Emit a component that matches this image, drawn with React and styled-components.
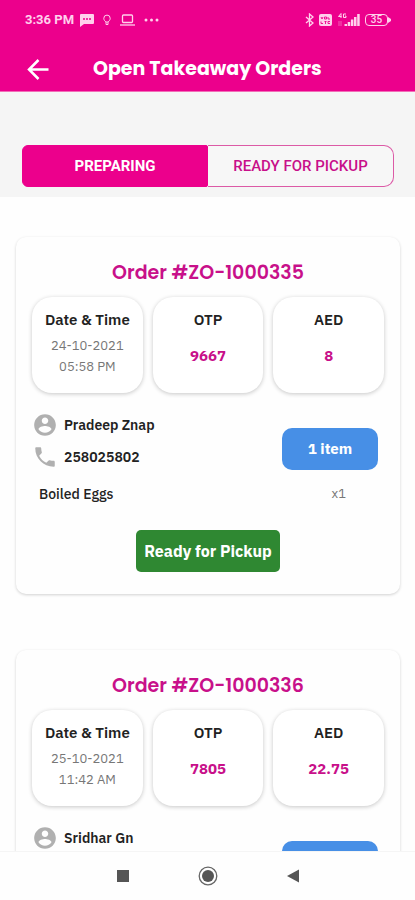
import React from "react";
import styled, { createGlobalStyle } from "styled-components";

const brand = "#ec008c";
const accent = "#c8108a";
const display = '"Poppins", "Inter", sans-serif';
const body = '"IBM Plex Sans", "Noto Sans", sans-serif';
const system = '"Roboto", sans-serif';

const GlobalStyle = createGlobalStyle`
  *, *::before, *::after { box-sizing: border-box; }
  body { margin: 0; background: #fefefe; font-family: ${body}; color: #222; }
  h1, h2, h3, p, ul, dl, dd { margin: 0; padding: 0; }
  button { font: inherit; border: 0; padding: 0; cursor: pointer; }
`;

const Screen = styled.div`
  display: flex;
  flex-direction: column;
  height: 100vh;
`;

const Top = styled.header`
  flex: none;
  background: ${brand};
  color: #fff;
  border-bottom: 1px solid #f26db8;
`;

const StatusBar = styled.div`
  display: flex;
  align-items: center;
  justify-content: space-between;
  height: 40px;
  padding: 0 24px 0 25px;
  font: 700 13px/16px ${system};
  color: #ffd0ec;
`;

const StatusGroup = styled.div`
  display: flex;
  align-items: center;
  gap: ${(p) => p.$gap}px;
  svg { display: block; }
`;

const TitleBar = styled.div`
  display: flex;
  align-items: center;
  height: 51px;
  padding: 6px 24px 0;
  gap: 41px;
`;

const BackButton = styled.button`
  display: flex;
  width: 28px;
  height: 28px;
  align-items: center;
  justify-content: center;
  background: none;
  color: #fff;
`;

const PageTitle = styled.h1`
  font: 700 19px/28px ${display};
  white-space: nowrap;
`;

const Content = styled.main`
  flex: 1;
  min-height: 0;
  overflow-y: auto;
  scrollbar-width: none;
`;

const TabStrip = styled.div`
  padding: 53px 21px 10px 22px;
  background: #f5f5f5;
`;

const Tabs = styled.div`
  display: grid;
  grid-template-columns: 1fr 1fr;
  height: 42px;
`;

const Tab = styled.button`
  font: ${(p) => (p.$active ? 700 : 500)} 15px/20px ${system};
  background: ${(p) => (p.$active ? brand : "#f7f7f7")};
  color: ${(p) => (p.$active ? "#fff" : accent)};
  border: 1px solid ${(p) => (p.$active ? brand : "#dc5aa6")};
  border-left-width: ${(p) => (p.$active ? 1 : 0)}px;
  border-radius: ${(p) => (p.$active ? "6px 2px 2px 6px" : "0 10px 10px 0")};
`;

const Orders = styled.div`
  display: flex;
  flex-direction: column;
  gap: 56px;
  padding: 40px 15px 40px 16px;
`;

const Card = styled.article`
  padding: 21px 16px 22px;
  border-radius: 10px;
  background: #fefefe;
  box-shadow: 0 1px 3px rgba(0, 0, 0, 0.18);
`;

const OrderTitle = styled.h2`
  font: 600 19px/30px ${display};
  color: ${accent};
  text-align: center;
`;

const Tiles = styled.div`
  display: grid;
  grid-template-columns: repeat(3, 1fr);
  gap: 10px;
  margin-top: 9px;
`;

const Tile = styled.section`
  display: flex;
  flex-direction: column;
  height: 96px;
  padding: 12px 4px;
  border-radius: 20px;
  background: #fff;
  text-align: center;
  box-shadow: 0 1px 4px rgba(0, 0, 0, 0.22);
`;

const TileLabel = styled.h3`
  font: 600 15px/22px ${body};
`;

const TileText = styled.p`
  margin-top: 4px;
  font: 400 13px/21px ${body};
  color: #777;
`;

const TileValue = styled.p`
  margin-top: 14px;
  font: 700 15px/22px ${body};
  color: ${accent};
`;

const Customer = styled.div`
  display: flex;
  justify-content: space-between;
  align-items: flex-start;
  margin-top: 20px;
  padding-right: 6px;
`;

const Contacts = styled.ul`
  display: flex;
  flex-direction: column;
  gap: 8px;
  list-style: none;
`;

const Contact = styled.li`
  display: flex;
  align-items: center;
  gap: 6px;
  height: 24px;
  font: 600 14px/22px ${body};
  svg { display: block; fill: #b0b0b0; }
`;

const CountButton = styled.button`
  width: 96px;
  height: 42px;
  margin-top: 15px;
  border-radius: 10px;
  background: #478fe6;
  color: #fff;
  font: 700 15px/20px ${body};
`;

const Line = styled.div`
  display: flex;
  justify-content: space-between;
  margin-top: 13px;
  padding: 0 38px 0 7px;
  font: 500 14px/22px ${body};
`;

const Quantity = styled.span`
  font-size: 13px;
  font-weight: 400;
  color: #777;
`;

const ReadyButton = styled.button`
  display: block;
  height: 42px;
  margin: 25px auto 0;
  padding: 0 8px;
  border-radius: 5px;
  background: #2f8832;
  color: #fff;
  font: 700 16px/22px ${body};
`;

const NavBar = styled.nav`
  flex: none;
  display: flex;
  justify-content: center;
  align-items: center;
  gap: 61px;
  height: 49px;
  border-top: 1px solid #f5f5f5;
  background: #fefefe;
`;

const NavButton = styled.button`
  display: flex;
  width: 24px;
  height: 24px;
  background: none;
  svg { display: block; }
`;

const orders = [
  { id: "ZO-1000335", date: "24-10-2021", time: "05:58 PM", otp: "9667", total: "8", name: "Pradeep Znap", phone: "258025802", count: "1 item", item: "Boiled Eggs", qty: "x1" },
  { id: "ZO-1000336", date: "25-10-2021", time: "11:42 AM", otp: "7805", total: "22.75", name: "Sridhar Gn", phone: "", count: "", item: "", qty: "" },
];

const MessageIcon = () => (
  <svg width="14" height="14" viewBox="0 0 14 14" fill="currentColor">
    <path d="M1 1h12a1 1 0 0 1 1 1v8a1 1 0 0 1-1 1H4l-4 3V2a1 1 0 0 1 1-1z" />
    <path d="M3 6h2M6 6h2M9 6h2" stroke={brand} strokeWidth="1.5" />
  </svg>
);

const BulbIcon = () => (
  <svg width="8" height="12" viewBox="0 0 8 12" fill="none" stroke="currentColor">
    <path d="M3 8C1.600 7 .8 5.800.8 4.300a3.200 3.200 0 0 1 6.400 0C7.200 5.800 6.400 7 5 8M3 8h2v2.500H3z" />
  </svg>
);

const LaptopIcon = () => (
  <svg width="15" height="12" viewBox="0 0 15 12" fill="none" stroke="currentColor" strokeWidth="1.300">
    <rect x="2.500" y="1" width="10" height="7.500" rx="1" />
    <path d="M0 11h15" />
  </svg>
);

const DotsIcon = () => (
  <svg width="15" height="4" viewBox="0 0 15 4" fill="currentColor">
    <circle cx="2" cy="2" r="1.500" />
    <circle cx="7.500" cy="2" r="1.500" />
    <circle cx="13" cy="2" r="1.500" />
  </svg>
);

const BluetoothIcon = () => (
  <svg width="9" height="14" viewBox="0 0 9 14" fill="none" stroke="currentColor" strokeWidth="1.300">
    <path d="M1 4l7 6-3.500 3V1L8 4l-7 6" />
  </svg>
);

const VolteIcon = () => (
  <svg width="13" height="12" viewBox="0 0 13 12">
    <rect width="13" height="12" rx="2" fill="currentColor" />
    <path d="M2 3l1 2 1-2M5.500 3h2v2h-2zM9 3v2h2M2 7.500v2h2M5.500 7.500h2M6.500 7.500v2.500M11 7.500H9v2h2" fill="none" stroke={brand} strokeWidth=".9" />
  </svg>
);

const SignalIcon = () => (
  <svg width="23" height="14" viewBox="0 0 23 14" fill="currentColor">
    <path d="M4 .5L1.500 3.500h3M4 .5v4.500M9 1H6.500v3.500H9V3H8" fill="none" stroke="currentColor" />
    <path d="M2 8v5M4 8v5" stroke="currentColor" opacity=".45" />
    <path d="M7.500 11h2.500v2H7.500zM10.700 9h2.500v4h-2.500zM13.900 6.500h2.500V13h-2.500zM17 4h2.500v9H17zM20.200 1h2.500v12h-2.500z" />
  </svg>
);

const BatteryFrame = styled.span`
  display: flex;
  align-items: center;
  svg { display: block; }
`;

const BatteryLevel = styled.span`
  width: 23px;
  border: 1px solid currentColor;
  border-radius: 4px;
  font: 500 10px/10px ${system};
  text-align: center;
`;

const Battery = () => (
  <BatteryFrame>
    <BatteryLevel>35</BatteryLevel>
    <svg width="3" height="6" viewBox="0 0 3 6" fill="currentColor"><path d="M0 0l3 2v2L0 6z" /></svg>
  </BatteryFrame>
);

const BackIcon = () => (
  <svg width="24" height="24" viewBox="0 0 24 24" fill="none" stroke="currentColor" strokeWidth="2.500">
    <path d="M22.500 12.500H3M12.500 3L3 12.500l9.500 9.500" />
  </svg>
);

const PersonIcon = () => (
  <svg width="26" height="26" viewBox="0 0 24 24">
    <path d="M12 2C6.480 2 2 6.480 2 12s4.480 10 10 10 10-4.480 10-10S17.520 2 12 2zm0 3c1.660 0 3 1.340 3 3s-1.340 3-3 3-3-1.340-3-3 1.340-3 3-3zm0 14.200c-2.500 0-4.710-1.280-6-3.220.03-1.990 4-3.080 6-3.080 1.990 0 5.970 1.090 6 3.080-1.290 1.940-3.500 3.220-6 3.220z" />
  </svg>
);

const PhoneIcon = () => (
  <svg width="26" height="26" viewBox="0 0 24 24">
    <path d="M6.620 10.790c1.440 2.830 3.760 5.140 6.590 6.590l2.200-2.200c.27-.27.67-.36 1.020-.24 1.120.37 2.330.57 3.570.57.550 0 1 .45 1 1V20c0 .55-.45 1-1 1-9.390 0-17-7.610-17-17 0-.55.45-1 1-1h3.500c.55 0 1 .45 1 1 0 1.250.2 2.450.57 3.570.11.35.03.74-.25 1.020l-2.200 2.200z" />
  </svg>
);

function OrderCard({ order }) {
  return (
    <Card>
      <OrderTitle>Order #{order.id}</OrderTitle>
      <Tiles>
        <Tile>
          <TileLabel>Date &amp; Time</TileLabel>
          <TileText>{order.date}<br />{order.time}</TileText>
        </Tile>
        <Tile>
          <TileLabel>OTP</TileLabel>
          <TileValue>{order.otp}</TileValue>
        </Tile>
        <Tile>
          <TileLabel>AED</TileLabel>
          <TileValue>{order.total}</TileValue>
        </Tile>
      </Tiles>
      <Customer>
        <Contacts>
          <Contact><PersonIcon />{order.name}</Contact>
          {order.phone && <Contact><PhoneIcon />{order.phone}</Contact>}
        </Contacts>
        <CountButton aria-label={order.count || "Items in order"}>{order.count}</CountButton>
      </Customer>
      {order.item && (
        <>
          <Line><span>{order.item}</span><Quantity>{order.qty}</Quantity></Line>
          <ReadyButton>Ready for Pickup</ReadyButton>
        </>
      )}
    </Card>
  );
}

export default function App() {
  return (
    <Screen>
      <GlobalStyle />
      <Top>
        <StatusBar>
          <StatusGroup $gap={9}>
            <StatusGroup $gap={6}><span>3:36 PM</span><MessageIcon /></StatusGroup>
            <BulbIcon />
            <LaptopIcon />
            <DotsIcon />
          </StatusGroup>
          <StatusGroup $gap={5}>
            <BluetoothIcon />
            <VolteIcon />
            <SignalIcon />
            <Battery />
          </StatusGroup>
        </StatusBar>
        <TitleBar>
          <BackButton aria-label="Back"><BackIcon /></BackButton>
          <PageTitle>Open Takeaway Orders</PageTitle>
        </TitleBar>
      </Top>
      <Content>
        <TabStrip>
          <Tabs role="tablist">
            <Tab role="tab" aria-selected="true" $active>PREPARING</Tab>
            <Tab role="tab" aria-selected="false">READY FOR PICKUP</Tab>
          </Tabs>
        </TabStrip>
        <Orders>
          {orders.map((order) => <OrderCard key={order.id} order={order} />)}
        </Orders>
      </Content>
      <NavBar>
        <NavButton aria-label="Recent apps">
          <svg width="24" height="24" viewBox="0 0 24 24"><path d="M6 6h12v12H6z" fill="#555" /></svg>
        </NavButton>
        <NavButton aria-label="Home">
          <svg width="24" height="24" viewBox="0 0 24 24"><circle cx="12" cy="12" r="8.800" fill="none" stroke="#666" strokeWidth="1.300" /><circle cx="12" cy="12" r="6" fill="#555" /></svg>
        </NavButton>
        <NavButton aria-label="Back to previous screen">
          <svg width="24" height="24" viewBox="0 0 24 24"><path d="M6 12l12-6.500v13z" fill="#555" /></svg>
        </NavButton>
      </NavBar>
    </Screen>
  );
}
